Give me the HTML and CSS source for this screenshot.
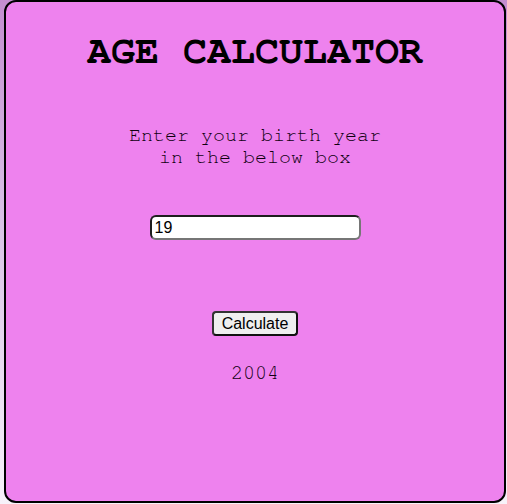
FILE: index.html
```html
<!DOCTYPE html>
<html>
<head>
<meta charset="utf-8">
<title>Age Calculator</title>
<link rel="stylesheet" href="styles.css">
</head>
<body>
<div class="card">
  <h1 class="title">AGE CALCULATOR</h1>
  <p class="prompt">Enter your birth year in the below box</p>
  <input class="year-input" type="text" value="19">
  <button class="calc-btn" type="button">Calculate</button>
  <p class="result">2004</p>
</div>
</body>
</html>
```

FILE: styles.css
```css
html, body {
  margin: 0;
  padding: 0;
  height: 100%;
}
body {
  background: linear-gradient(180deg, #c48dd0 0%, #d9c2e6 45%, #f7f2f9 100%);
  padding-left: 4px;
  box-sizing: border-box;
}
.card {
  box-sizing: border-box;
  width: 502px;
  height: 503px;
  background: #ee82ee;
  border: 2px solid #000;
  border-radius: 12px;
  display: flex;
  flex-direction: column;
  align-items: center;
  padding-top: 27px;
}
.title {
  margin: 0;
  font-family: "Nimbus Mono PS", "Nimbus Mono L", "FreeMono", "Courier", "Courier New", "Liberation Mono", monospace;
  font-weight: bold;
  font-size: 40px;
  line-height: 45px;
  color: #000;
}
.prompt {
  margin: 50px 0 0;
  width: 270px;
  text-align: center;
  font-family: "Nimbus Mono PS", "Nimbus Mono L", "FreeMono", "Courier", "Courier New", "Liberation Mono", monospace;
  font-size: 20px;
  line-height: 22px;
  color: #100010;
}
.year-input {
  margin-top: 47px;
  box-sizing: border-box;
  width: 211px;
  height: 25px;
  padding: 1px 3px;
  font-family: "Liberation Sans", Arial, sans-serif;
  font-size: 16px;
  color: #000;
  background: #fff;
  border: 2px solid;
  border-color: #1e1e1e #767676 #767676 #1e1e1e;
  border-radius: 6px;
  outline: none;
}
.calc-btn {
  margin-top: 71px;
  box-sizing: border-box;
  height: 25px;
  padding: 1px 8px;
  font-family: "Liberation Sans", Arial, sans-serif;
  font-size: 16px;
  color: #000;
  background: #efefef;
  border: 2px solid;
  border-color: #333 #111 #111 #333;
  border-radius: 4px;
}
.result {
  margin: 26px 0 0;
  font-family: "Nimbus Mono PS", "Nimbus Mono L", "FreeMono", "Courier", "Courier New", "Liberation Mono", monospace;
  font-size: 20px;
  line-height: 22.6px;
  color: #100010;
}
```
